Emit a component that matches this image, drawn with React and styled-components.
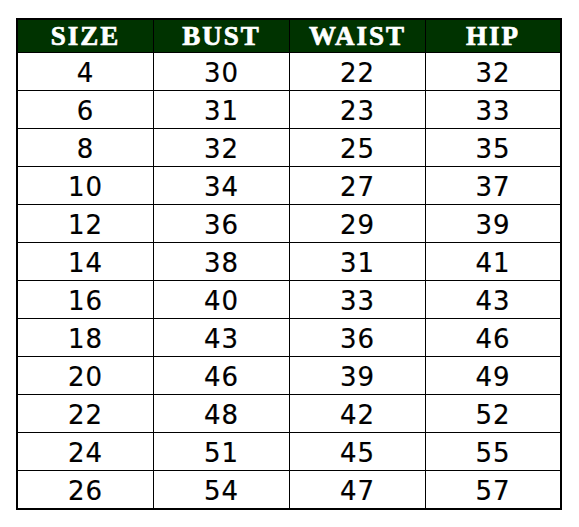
import React from "react";
import styled, { createGlobalStyle } from "styled-components";

const GlobalStyle = createGlobalStyle`
  body {
    margin: 0;
    background: #fff;
  }
`;

const Table = styled.div`
  margin: 18px 0 0 16px;
  width: 542px;
  border: 2px solid #000;
  background: #000;
  display: flex;
  flex-direction: column;
  gap: 1px;
`;

const Row = styled.div`
  display: grid;
  grid-template-columns: 135px 135px 135px 134px;
  column-gap: 1px;
  height: ${(p) => (p.$head ? "31px" : "37px")};
  margin-bottom: ${(p) => (p.$head ? "1px" : "0")};
`;

const HeadCell = styled.div`
  background: #003300;
  color: #fff;
  font-family: "Liberation Serif", "Times New Roman", serif;
  font-weight: bold;
  font-size: 27px;
  letter-spacing: 2px;
  -webkit-text-stroke: 0.7px #fff;
  display: flex;
  align-items: center;
  justify-content: center;
  padding-top: 1px;
`;

const Cell = styled.div`
  background: #fff;
  color: #000;
  font-family: "DejaVu Sans", Verdana, sans-serif;
  font-size: 26px;
  letter-spacing: 1px;
  -webkit-text-stroke: 0.2px #000;
  display: flex;
  align-items: center;
  justify-content: center;
  padding-top: 3px;
`;

const head = ["SIZE", "BUST", "WAIST", "HIP"];
const rows = [
  [4, 30, 22, 32],
  [6, 31, 23, 33],
  [8, 32, 25, 35],
  [10, 34, 27, 37],
  [12, 36, 29, 39],
  [14, 38, 31, 41],
  [16, 40, 33, 43],
  [18, 43, 36, 46],
  [20, 46, 39, 49],
  [22, 48, 42, 52],
  [24, 51, 45, 55],
  [26, 54, 47, 57],
];

export default function App() {
  return (
    <>
      <GlobalStyle />
      <Table>
        <Row $head>
          {head.map((h) => (
            <HeadCell key={h}>{h}</HeadCell>
          ))}
        </Row>
        {rows.map((r) => (
          <Row key={r[0]}>
            {r.map((v, i) => (
              <Cell key={i}>{v}</Cell>
            ))}
          </Row>
        ))}
      </Table>
    </>
  );
}
